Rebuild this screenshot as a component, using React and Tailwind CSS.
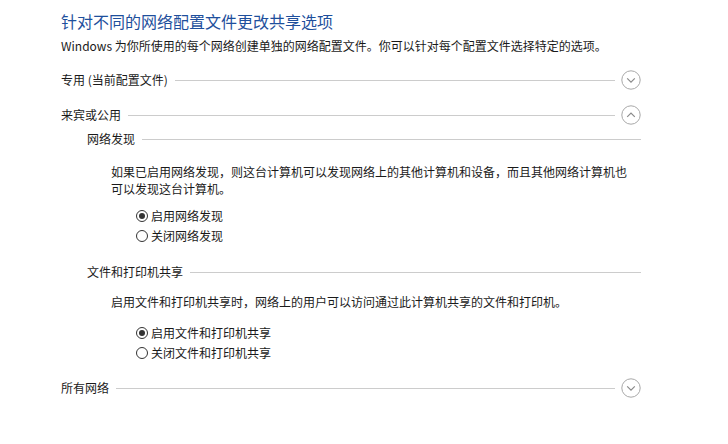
const FONT = { fontFamily: '"Microsoft YaHei", "Noto Sans CJK SC", "Noto Sans", sans-serif' };

const Chevron = ({ up }) => (
  <svg width="20" height="20" viewBox="0 0 20 20" className="flex-shrink-0">
    <circle cx="10" cy="10" r="9.2" fill="none" stroke="#a8a8a8" strokeWidth="1" />
    {up ? (
      <path d="M6.2 11.8 L10 8 L13.8 11.8" fill="none" stroke="#8a8a8a" strokeWidth="1.2" />
    ) : (
      <path d="M6.2 8.4 L10 12.2 L13.8 8.4" fill="none" stroke="#8a8a8a" strokeWidth="1.2" />
    )}
  </svg>
);

const Radio = ({ checked, label }) => (
  <label className="flex items-center h-[20px] gap-[3px] text-[12px] text-[#1a1a1a]">
    <span className="w-[12px] h-[12px] rounded-full border border-[#333333] bg-white flex items-center justify-center">
      {checked && <span className="w-[6px] h-[6px] rounded-full bg-[#333333]" />}
    </span>
    {label}
  </label>
);

const ProfileRow = ({ label, up, className = "" }) => (
  <div className={`flex items-center h-[20px] ${className}`}>
    <span className="text-[12px] text-[#1a1a1a] whitespace-nowrap">{label}</span>
    <div className="flex-1 h-px bg-[#cccccc] ml-[7px] mr-[6px]" />
    <Chevron up={up} />
  </div>
);

const SubHeader = ({ label, className = "" }) => (
  <div className={`flex items-center h-[18px] ml-[26px] ${className}`}>
    <span className="text-[12px] text-[#1a1a1a] whitespace-nowrap">{label}</span>
    <div className="flex-1 h-px bg-[#cccccc] ml-[7px]" />
  </div>
);

export default function App() {
  return (
    <div className="w-[728px] h-[444px] bg-white overflow-hidden" style={FONT}>
      <div className="w-[641px] pl-[61px] pt-[9px]">
        <h1 className="text-[16px] leading-[24px] text-[#1e4f9c] font-normal whitespace-nowrap">
          针对不同的网络配置文件更改共享选项
        </h1>
        <p className="mt-[4px] text-[12px] leading-[18px] text-[#1a1a1a] whitespace-nowrap">
          Windows 为你所使用的每个网络创建单独的网络配置文件。你可以针对每个配置文件选择特定的选项。
        </p>

        <ProfileRow label="专用 (当前配置文件)" className="mt-[15px]" />
        <ProfileRow label="来宾或公用" up className="mt-[15px]" />

        {/* 网络发现 */}
        <SubHeader label="网络发现" className="mt-[5px]" />
        <p className="mt-[15px] ml-[50px] w-[522px] text-[12px] leading-[17px] text-[#1a1a1a]">
          如果已启用网络发现，则这台计算机可以发现网络上的其他计算机和设备，而且其他网络计算机也可以发现这台计算机。
        </p>
        <div className="mt-[9px] ml-[75px] flex flex-col">
          <Radio checked label="启用网络发现" />
          <Radio label="关闭网络发现" />
        </div>

        {/* 文件和打印机共享 */}
        <SubHeader label="文件和打印机共享" className="mt-[17px]" />
        <p className="mt-[12px] ml-[50px] text-[12px] leading-[17px] text-[#1a1a1a] whitespace-nowrap">
          启用文件和打印机共享时，网络上的用户可以访问通过此计算机共享的文件和打印机。
        </p>
        <div className="mt-[13px] ml-[75px] flex flex-col">
          <Radio checked label="启用文件和打印机共享" />
          <Radio label="关闭文件和打印机共享" />
        </div>

        <ProfileRow label="所有网络" className="mt-[15px]" />
      </div>
    </div>
  );
}
